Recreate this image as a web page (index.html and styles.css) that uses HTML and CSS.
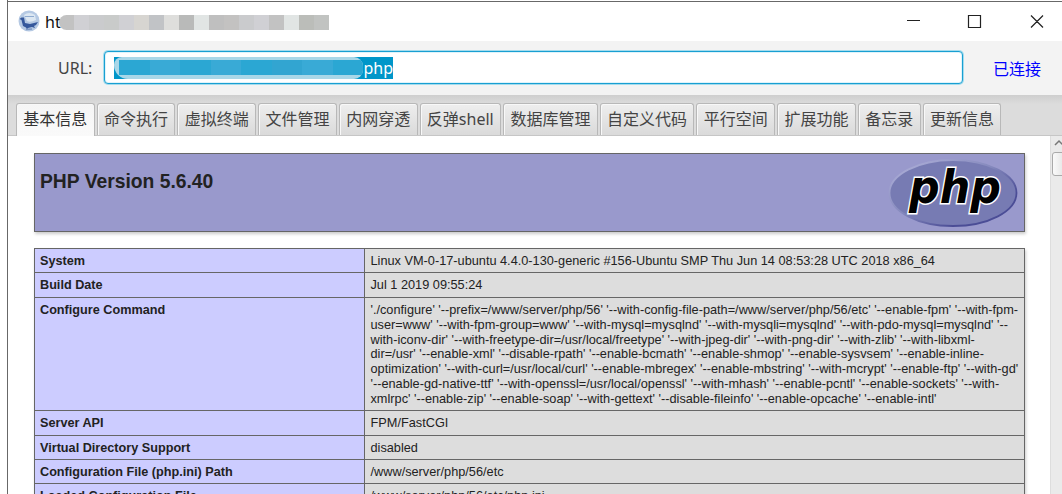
FILE: index.html
```
<!DOCTYPE html>
<html lang="zh-CN">
<head>
<meta charset="utf-8">
<title>PHP Version 5.6.40</title>
<link rel="stylesheet" href="styles.css">
</head>
<body>
<div class="window">
  <header class="titlebar">
    <svg class="app-icon" width="22" height="22" viewBox="0 0 22 22">
      <circle cx="11" cy="11" r="10.500" fill="#b5c9e3"/>
      <path d="M6 5q5-4 11 0l1 5q-6 3-9 1z" fill="#dce7f2"/>
      <path d="M7 6.500h9" stroke="#8fabd0" stroke-width="1"/>
      <path d="M1.500 9l2-1.500 2.500 0 1 5.500 5 1 4-1 4-1-2 3-2 1 1 2-3-1-4 1-1 1.500-1-2-3-1.500-1.500-6z" fill="#35589c"/>
      <path d="M8 19.500l6-.5" stroke="#7d98c4" stroke-width="1.500"/>
    </svg>
    <span class="title">ht</span>
    <span class="mosaic"><i class="m1"></i><i class="m2"></i><i class="m3"></i><i class="m4"></i><i class="m2"></i><i class="m5"></i><i class="m6"></i><i class="m7"></i><i class="m8"></i><i class="m9"></i><i class="m10"></i><i class="m11"></i><i class="m3"></i><i class="m2"></i><i class="m1"></i><i class="m9"></i><i class="m12"></i><i class="m13"></i></span>
    <svg class="controls" width="140" height="16" viewBox="0 0 140 16" fill="none" stroke="#222" stroke-width="1.200">
      <path d="M1 6.500h13M62.500 1.500h12v12H62.500zM125 1.500l12 12M137 1.500l-12 12"/>
    </svg>
  </header>
  <section class="urlbar">
    <span class="url-label">URL:</span>
    <div class="field"><div class="selection"><span class="redacted"><i class="b1"></i><i class="b2"></i><i class="b1"></i><i class="b2"></i><i class="b1"></i><i class="b3"></i><i class="b2"></i><i class="b1"></i></span><span>php</span></div></div>
    <span class="status">已连接</span>
  </section>
  <nav class="tabs">
    <span class="tab active">基本信息</span><span class="tab">命令执行</span><span class="tab">虚拟终端</span><span class="tab">文件管理</span><span class="tab">内网穿透</span><span class="tab mixed">反弹shell</span><span class="tab">数据库管理</span><span class="tab">自定义代码</span><span class="tab">平行空间</span><span class="tab">扩展功能</span><span class="tab">备忘录</span><span class="tab">更新信息</span>
  </nav>
  <main class="content">
    <div class="page">
      <div class="banner">
        <h1>PHP Version 5.6.40</h1>
        <svg class="logo" width="130" height="70" viewBox="0 0 130 70">
          <defs>
            <linearGradient id="rim" x1="0" y1="0" x2="1" y2="1"><stop offset="0" stop-color="#b4b5dc"/><stop offset=".45" stop-color="#8589bd"/><stop offset=".75" stop-color="#4b4d96"/></linearGradient>
          </defs>
          <ellipse cx="65" cy="35" rx="63.500" ry="33" fill="#777bb3" stroke="url(#rim)" stroke-width="1.800"/>
          <text class="logo-text" x="21" y="45" textLength="92" lengthAdjust="spacingAndGlyphs">php</text>
        </svg>
      </div>
      <div class="info">
        <div class="row"><b>System</b><div><p>Linux VM-0-17-ubuntu 4.4.0-130-generic #156-Ubuntu SMP Thu Jun 14 08:53:28 UTC 2018 x86_64</p></div></div>
        <div class="row"><b>Build Date</b><div><p>Jul 1 2019 09:55:24</p></div></div>
        <div class="row tall"><b>Configure Command</b><div>
          <p>'./configure' '--prefix=/www/server/php/56' '--with-config-file-path=/www/server/php/56/etc' '--enable-fpm' '--with-fpm-</p>
          <p>user=www' '--with-fpm-group=www' '--with-mysql=mysqlnd' '--with-mysqli=mysqlnd' '--with-pdo-mysql=mysqlnd' '--</p>
          <p>with-iconv-dir' '--with-freetype-dir=/usr/local/freetype' '--with-jpeg-dir' '--with-png-dir' '--with-zlib' '--with-libxml-</p>
          <p>dir=/usr' '--enable-xml' '--disable-rpath' '--enable-bcmath' '--enable-shmop' '--enable-sysvsem' '--enable-inline-</p>
          <p>optimization' '--with-curl=/usr/local/curl' '--enable-mbregex' '--enable-mbstring' '--with-mcrypt' '--enable-ftp' '--with-gd'</p>
          <p>'--enable-gd-native-ttf' '--with-openssl=/usr/local/openssl' '--with-mhash' '--enable-pcntl' '--enable-sockets' '--with-</p>
          <p>xmlrpc' '--enable-zip' '--enable-soap' '--with-gettext' '--disable-fileinfo' '--enable-opcache' '--enable-intl'</p>
        </div></div>
        <div class="row"><b>Server API</b><div><p>FPM/FastCGI</p></div></div>
        <div class="row"><b>Virtual Directory Support</b><div><p>disabled</p></div></div>
        <div class="row"><b>Configuration File (php.ini) Path</b><div><p>/www/server/php/56/etc</p></div></div>
        <div class="row"><b>Loaded Configuration File</b><div><p>/www/server/php/56/etc/php.ini</p></div></div>
      </div>
    </div>
    <aside class="scrollbar">
      <svg width="12" height="16" viewBox="0 0 12 16" fill="none" stroke="#777" stroke-width="1.500"><path d="M4 9l4-4 4 4"/></svg>
      <div class="thumb"></div>
    </aside>
  </main>
</div>
</body>
</html>
```
FILE: styles.css
```
* { box-sizing: border-box; }
body { margin: 0; width: 1062px; height: 494px; overflow: hidden; background: #fff; font-family: "Liberation Sans", Arial, sans-serif; }
.window { margin-left: 7px; width: 1055px; height: 494px; padding-top: 1px; border-left: 1px solid #686868; display: flex; flex-direction: column; overflow: hidden; }
.titlebar { flex: none; height: 40px; border-top: 1px solid #686868; display: flex; align-items: center; padding-left: 10px; }
.app-icon { flex: none; margin-top: -1px; }
.title { margin-left: 5px; font: 16px "Noto Sans", sans-serif; color: #111; }
.mosaic { display: flex; margin-left: -2px; height: 15px; border-radius: 8px 0 0 8px; overflow: hidden; margin-top: 1px; }
.mosaic i { width: 15px; flex: none; }
.m1 { background: #c2c2c2; } .m2 { background: #d0d0d4; } .m3 { background: #cacbcd; } .m4 { background: #c9cbca; }
.m5 { background: #d7d5d1; } .m6 { background: #c1c3c6; } .m7 { background: #dededc; } .m8 { background: #b9bab9; }
.m9 { background: #e1e5e4; } .m10 { background: #bfbfbf; } .m11 { background: #c3c2c1; } .m12 { background: #bbbdb9; } .m13 { background: #c1c3c1; }
.controls { margin-left: auto; margin-right: 16px; }
.urlbar { flex: none; height: 54px; background: #f3f3f3; display: flex; align-items: flex-start; padding: 10px 0 0 50px; font: 16px "Noto Sans", "Noto Sans CJK SC", sans-serif; }
.url-label { width: 46px; line-height: 34px; color: #444; }
.field { width: 859px; height: 33px; border: 1px solid #189fd2; border-radius: 4px; background: #fff; box-shadow: 0 0 0 1px #a5dced, inset 0 0 0 1px #dff3fa; padding: 5px 0 0 9px; }
.selection { width: 279px; height: 22px; background: #0096c9; display: flex; color: #fff; line-height: 22px; }
.redacted { width: 250px; height: 22px; background: #a9d7e8; border-radius: 8px 9px 9px 14px; display: flex; padding: 3px 0 4px 5px; overflow: hidden; }
.redacted i { flex: 1; }
.b1 { background: #2ba7d3; } .b2 { background: #39aad6; } .b3 { background: #32a5d1; }
.status { margin-left: 30px; line-height: 34px; color: #0000ff; font-family: "Noto Sans CJK SC", sans-serif; font-weight: 400; }
.tabs { flex: none; height: 41px; background: linear-gradient(#cecece, #dcdcdc 9px); border-bottom: 1px solid #c6c6c6; padding: 8px 0 0 8px; display: flex; gap: 2px; }
.tab { flex: none; height: 32px; border: 1px solid #b8b8b8; border-bottom: 0; border-radius: 3px 3px 0 0; background: linear-gradient(#eee, #dadada); box-shadow: inset 1px 1px 0 #f8f8f8; padding: 0 6.350px; font: 16px/31px "Noto Sans", "Noto Sans CJK SC", sans-serif; color: #444; white-space: nowrap; }
.mixed { letter-spacing: 0; }
.active { height: 33px; background: linear-gradient(#f5f5f5, #fafafa); color: #333; }
.content { flex: 1; min-height: 0; display: flex; overflow: hidden; }
.page { width: 1042px; flex: none; padding: 17px 0 0 26px; background: #fff; }
.banner { width: 991px; height: 78.500px; background: #9999cc; border: 1px solid #666; box-shadow: 1px 2px 3px #ccc; display: flex; justify-content: space-between; }
h1 { margin: 17px 0 0 5px; font-size: 19.300px; line-height: 22px; color: #222; white-space: nowrap; }
.logo { margin: 4px 6px 0 0; }
.logo-text { font: italic bold 46px "DejaVu Sans", sans-serif; fill: #000; stroke: #fff; stroke-width: 3px; paint-order: stroke; }
.info { width: 991px; margin-top: 16.500px; border: 1px solid #666; border-bottom: 0; box-shadow: 1px 2px 3px #ccc; font-size: 12.740px; line-height: 14.870px; color: #222; }
.row { display: flex; height: 24.400px; border-bottom: 1px solid #666; background: #ddd; }
.row b { width: 329.500px; flex: none; background: #ccccff; border-right: 1px solid #666; padding: 5px 0 0 5px; font-size: 12.660px; }
.row > div { padding: 5px 0 0 6px; }
.row p { margin: 0; width: max-content; white-space: nowrap; }
.tall { height: 113.500px; }
.scrollbar { width: 12px; flex: none; background: #eaeaea; border-left: 1px solid #ddd; overflow: hidden; }
.scrollbar svg { display: block; }
.thumb { width: 16px; height: 24px; margin-left: 1px; border: 1px solid #aaa; border-radius: 3px; background: linear-gradient(90deg, #fafafa, #e0e0e0); }
```
